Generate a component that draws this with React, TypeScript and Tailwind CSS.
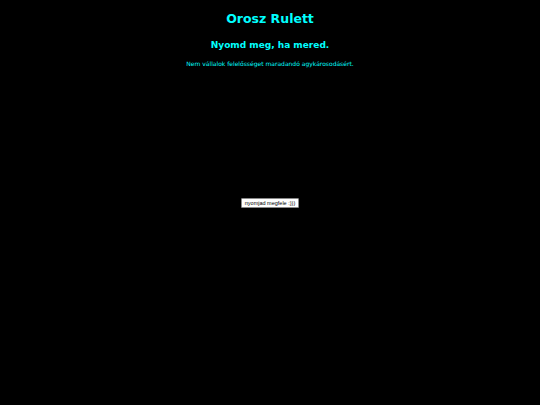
export default function App() {
  return (
    <div className="min-h-[405px] w-full bg-black text-[#00ffff] text-center" style={{ fontFamily: '"Comic Sans MS", "DejaVu Sans", sans-serif' }}>
      <h1 className="pt-[10px] text-[12.5px] font-bold leading-[18px]">Orosz Rulett</h1>
      <h2 className="mt-[10px] text-[9px] font-bold leading-[14px]">Nyomd meg, ha mered.</h2>
      <p className="mt-[7px] text-[6px] leading-[9px]">Nem vállalok felelősséget maradandó agykárosodásért.</p>
      <div className="mt-[130px] flex justify-center">
        <button className="h-[10px] px-[3px] bg-white text-black text-[5.5px] leading-[9px] border border-[#888] rounded-[1px]" style={{ fontFamily: '"Liberation Sans", Arial, sans-serif' }}>
          nyomjad megfele :)))
        </button>
      </div>
    </div>
  );
}
